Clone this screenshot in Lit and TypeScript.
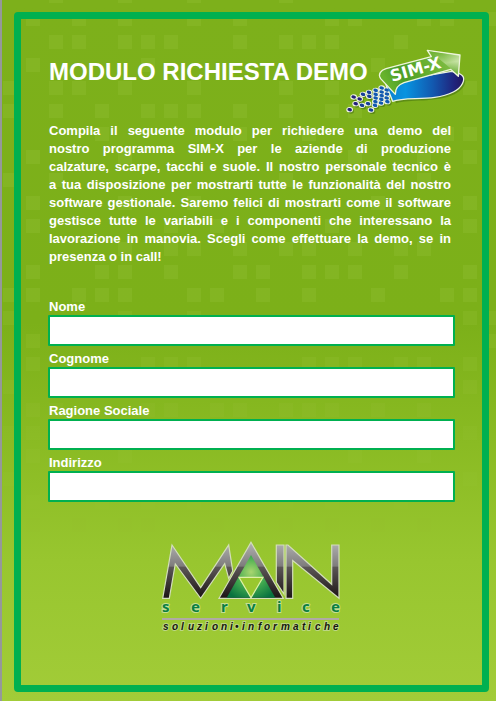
import { LitElement, html, svg, css } from "lit";
import { customElement } from "lit/decorators.js";

// Columns holding a light square, one list per row of the backdrop grid.
const SQUARES: number[][] = [
  [2, 5, 8, 12, 19],
  [1, 3, 5, 8, 10, 14, 15, 18, 19, 21],
  [2, 3, 5, 6, 7, 10, 12, 13, 14, 17],
  [1, 6, 16],
  [0, 2, 3, 5, 8, 12, 14, 20],
  [0, 2, 4, 6, 7, 8, 10, 12, 14, 15],
  [4, 10, 13, 19, 20],
  [1, 5, 15, 18, 20],
  [0, 2, 12, 18],
  [1, 5, 8, 16, 20],
  [1, 7, 9, 14, 20],
  [5, 7, 8, 10, 12, 13, 15, 17, 18],
  [1, 4, 5, 7, 10, 11, 13, 14, 15, 17, 20],
  [0, 1, 3, 4, 5, 8, 9, 11, 13, 16, 19, 20],
  [0, 5, 8, 20, 21],
  [1, 21],
  [1, 6, 7, 8, 13, 14, 15, 17, 18, 20],
  [0, 20],
  [1, 2, 6, 7, 9, 10, 12, 13, 14, 16, 18],
  [0, 1, 20],
  [1, 5, 15, 18],
  [0, 3, 20],
  [1, 4, 6, 8, 12, 14, 17],
  [1, 3, 5, 6, 9, 12, 14, 16, 18],
];

const DOTS: [number, number][] = [
  [29, 209], [41, 171], [59, 177], [47, 191], [66, 196], [69, 163], [87, 157],
  [88, 169], [84, 191], [93, 210], [107, 151], [107, 163], [107, 174],
  [106, 185], [105, 196], [125, 144], [125, 156], [125, 167], [124, 178],
  [123, 189], [140, 150], [141, 162], [140, 174], [142, 185],
];

const INTRO = [
  "Compila il seguente modulo per richiedere una demo del",
  "nostro programma SIM-X per le aziende di produzione",
  "calzature, scarpe, tacchi e suole. Il nostro personale tecnico è",
  "a tua disposizione per mostrarti tutte le funzionalità del nostro",
  "software gestionale. Saremo felici di mostrarti come il software",
  "gestisce tutte le variabili e i componenti che interessano la",
  "lavorazione in manovia. Scegli come effettuare la demo, se in",
  "presenza o in call!",
];

const FIELDS = [
  { id: "nome", label: "Nome" },
  { id: "cognome", label: "Cognome" },
  { id: "ragione", label: "Ragione Sociale" },
  { id: "indirizzo", label: "Indirizzo" },
];

@customElement("sim-x-logo")
export class SimXLogo extends LitElement {
  static styles = css`
    :host { display: block; }
    svg { display: block; width: 130px; height: 80px; }
    .name { font: bold 49px "DejaVu Sans", sans-serif; fill: #fff; }
  `;

  render() {
    return html`
      <svg viewBox="0 0 390 240" role="img" aria-label="SIM-X">
        <defs>
          <linearGradient id="blue" x1="0" x2="1">
            <stop offset="0" stop-color="#0b7fd0" />
            <stop offset="0.25" stop-color="#0793e0" />
            <stop offset="0.6" stop-color="#1259b0" />
            <stop offset="0.88" stop-color="#20237c" />
            <stop offset="1" stop-color="#23165e" />
          </linearGradient>
          <linearGradient id="green" x1="0" x2="1" y1="0.4" y2="0.1">
            <stop offset="0" stop-color="#67b32c" />
            <stop offset="0.2" stop-color="#4b9e27" />
            <stop offset="0.5" stop-color="#64ad2c" />
            <stop offset="0.8" stop-color="#7dbb42" />
            <stop offset="1" stop-color="#d9ecc0" />
          </linearGradient>
          <linearGradient id="head" x1="0.5" y1="0" x2="0.7" y2="1">
            <stop offset="0" stop-color="#6cb030" />
            <stop offset="0.5" stop-color="#d0e8b0" />
            <stop offset="1" stop-color="#5aa42b" />
          </linearGradient>
        </defs>
        <g fill="#3f6a10" opacity="0.5">
          ${DOTS.map(([x, y]) => svg`<ellipse cx=${x + 4} cy=${y + 5} rx="9" ry="7" />`)}
          <path d="M145 140 L168 190 C205 176 285 190 345 162 C372 148 382 126 372 112 Z" />
        </g>
        <g fill="#f0f5e6">
          ${DOTS.map(([x, y]) => svg`<ellipse cx=${x} cy=${y} rx="10" ry="8" />`)}
        </g>
        <path
          d="M138 134 L158 184 C200 168 280 186 340 156 C368 142 376 118 368 108 C362 100 350 98 335 94 L180 120 Z"
          fill="url(#blue)" stroke="#eaf2e4" stroke-width="4" stroke-linejoin="round"
        />
        ${DOTS.map(
          ([x, y]) => svg`<ellipse cx=${x} cy=${y} rx="7" ry="5"
            transform="rotate(15 ${x} ${y})"
            fill=${x > 95 ? "#1259b0" : x > 60 ? "#173f98" : "#23207a"} />`,
        )}
        <path
          d="M166 163 L122 116 C113 102 122 91 138 86 L274 50 L262 31 L360 45 L355 109 L332 88 L192 128 C176 134 166 142 166 163 Z"
          fill="url(#green)" stroke="#eef5dc" stroke-width="4" stroke-linejoin="round"
        />
        <path d="M290 50 L266 34 L357 47 L353 103 L333 86 Z" fill="url(#head)" opacity="0.6" />
        <text class="name" x="156" y="126" transform="rotate(-16 156 126)">SIM-X</text>
      </svg>
    `;
  }
}

@customElement("main-service-logo")
export class MainServiceLogo extends LitElement {
  static styles = css`
    :host { display: block; }
    svg { display: block; width: 181px; height: 94px; }
    .letter { fill: url(#steel); stroke: #d3deba; stroke-width: 1.2; }
    .service {
      font: bold 15px "Noto Sans", sans-serif;
      fill: #0a7f42;
      stroke: #c6df93;
      stroke-width: 2px;
      paint-order: stroke;
    }
    .tagline {
      font: italic bold 10px "Liberation Sans", Arial, sans-serif;
      fill: #15170c;
      stroke: #bdd685;
      stroke-width: 2px;
      paint-order: stroke;
    }
  `;

  render() {
    return html`
      <svg viewBox="0 0 181 94" role="img" aria-label="MAIN service soluzioni informatiche">
        <defs>
          <linearGradient id="steel" gradientUnits="userSpaceOnUse" x1="0" x2="0" y1="3" y2="58">
            <stop offset="0" stop-color="#b0b0b0" />
            <stop offset="0.42" stop-color="#7e7c7c" />
            <stop offset="0.44" stop-color="#5b5656" />
            <stop offset="1" stop-color="#1c1516" />
          </linearGradient>
          <radialGradient id="emerald" gradientUnits="userSpaceOnUse" cx="90" cy="32" r="30">
            <stop offset="0" stop-color="#a9d66f" />
            <stop offset="0.5" stop-color="#43ab50" />
            <stop offset="1" stop-color="#08723f" />
          </radialGradient>
        </defs>
        <path class="letter" d="M1.7 58.3 L11 5 L39.7 47.7 L67.7 5 L71.7 31 L67.7 38.5 L63.7 23.7 L39.7 58.3 L14.3 24 L8.3 58.3 Z" />
        <path class="letter" d="M115.3 5 H123 V54 L115.3 42.3 Z" />
        <path class="letter" d="M125 58.3 V5 H127 L170.7 44.3 V5 H178 V58.3 L131.7 20.5 V58.3 Z" />
        <path class="letter" d="M90 2.3 L122.3 58.3 H58 Z" />
        <path d="M90 15 L114.3 57.8 H65.7 Z" fill="url(#emerald)" />
        <path d="M78 37.3 H102 L90 57.7 Z" fill="#99c72e" stroke="#dff0a8" stroke-width="1.2" />
        <text class="service" x="1 30 60 86 116 141 170" y="72">service</text>
        <rect x="1" y="78" width="177" height="2" fill="#b0aaa4" />
        <text
          class="tagline"
          x="2 11 20 27 36 44 51 60 69 74 81 87 97 103 112 120 132 141 147 154 163 172"
          y="90"
        >soluzioni•informatiche</text>
      </svg>
    `;
  }
}

@customElement("app-root")
export class AppRoot extends LitElement {
  static styles = css`
    :host {
      display: flex;
      position: relative;
      box-sizing: border-box;
      min-height: 100vh;
      padding: 12px 7px 9px 12px;
      border-left: 2px solid #95989a;
      overflow: hidden;
      background: linear-gradient(#7db01b 0%, #7cb019 46%, #89ba22 62%, #98c62f 80%, #a2cc38 100%);
      font-family: "Liberation Sans", Arial, sans-serif;
      color: #fff;
    }
    .backdrop {
      position: absolute;
      inset: 0;
      width: 100%;
      height: 100%;
    }
    .square { fill: #a4cb48; }
    .frame {
      position: relative;
      flex: 1;
      min-width: 0;
      box-sizing: border-box;
      padding: 21px 12px;
      border: 7px solid #00b050;
      border-radius: 4px;
    }
    .header { display: grid; padding-left: 16px; }
    .title, .brand { grid-area: 1 / 1; }
    .title {
      margin: 0;
      font-size: 24px;
      line-height: 64px;
      font-weight: bold;
    }
    .brand { justify-self: end; }
    .intro {
      margin: 2px 19px 32px 16px;
      font-size: 13px;
      line-height: 18px;
      font-weight: bold;
    }
    .line { display: block; text-align-last: justify; }
    .line:last-child { text-align-last: start; }
    .form {
      display: flex;
      flex-direction: column;
      gap: 4px;
      padding: 0 15px;
    }
    .field { display: flex; flex-direction: column; }
    .label {
      padding-left: 1px;
      font-size: 13px;
      line-height: 17px;
      font-weight: bold;
    }
    .input {
      box-sizing: border-box;
      width: 100%;
      height: 31px;
      padding: 0 6px;
      border: 2px solid #00b050;
      border-radius: 1px;
      background: #fff;
      font: 13px "Liberation Sans", Arial, sans-serif;
      color: #222;
    }
    .footer {
      display: flex;
      justify-content: center;
      margin-top: 38px;
    }
  `;

  private renderBackdrop() {
    return html`
      <svg class="backdrop" aria-hidden="true">
        ${SQUARES.map((columns, row) =>
          columns.map(
            (column) => svg`<rect class="square" x=${1 + 23 * column} y=${23 * row - 11}
              width="14" height="14" opacity=${row < 14 ? 0.19 : 0.19 - (row - 13) * 0.016} />`,
          ),
        )}
      </svg>
    `;
  }

  render() {
    return html`
      ${this.renderBackdrop()}
      <main class="frame">
        <header class="header">
          <h1 class="title">MODULO RICHIESTA DEMO</h1>
          <sim-x-logo class="brand"></sim-x-logo>
        </header>
        <p class="intro">${INTRO.map((line) => html`<span class="line">${line} </span>`)}</p>
        <form class="form">
          ${FIELDS.map(
            (field) => html`
              <div class="field">
                <label class="label" for=${field.id}>${field.label}</label>
                <input class="input" type="text" id=${field.id} name=${field.id} />
              </div>
            `,
          )}
        </form>
        <footer class="footer"><main-service-logo></main-service-logo></footer>
      </main>
    `;
  }
}
